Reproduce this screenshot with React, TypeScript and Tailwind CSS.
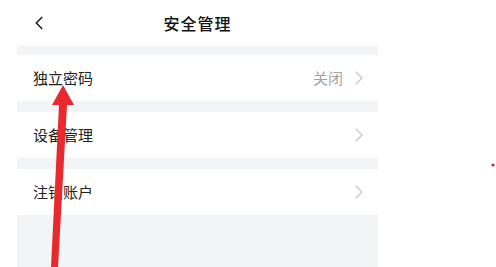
import { ChevronLeft, ChevronRight } from "lucide-react";

const rows = [
  { label: "独立密码", value: "关闭" },
  { label: "设备管理" },
  { label: "注销账户" },
];

function Row({ label, value }: { label: string; value?: string }) {
  return (
    <div className="h-[46px] bg-white flex items-center pl-4 pr-[7px]">
      <span className="text-[15px] text-[#222]">{label}</span>
      <div className="ml-auto flex items-center gap-[4px]">
        {value && <span className="text-[15px] text-[#a3a3a3]">{value}</span>}
        <ChevronRight className="size-[24px] text-[#c4c4c4]" strokeWidth={1.1} />
      </div>
    </div>
  );
}

export default function App() {
  return (
    <div
      className="relative w-[496px] h-[267px] bg-white overflow-hidden"
      style={{ fontFamily: '"Noto Sans CJK SC", "Noto Sans", sans-serif' }}
    >
      <div className="ml-[17px] w-[361px] h-full flex flex-col bg-[#f3f4f6]">
        {/* Header */}
        <div className="h-[46px] bg-white flex items-center relative shrink-0">
          <ChevronLeft className="absolute left-[11px] size-[22px] text-[#222]" strokeWidth={1.8} />
          <span className="mx-auto text-[16px] font-medium text-[#111] tracking-[1px]">安全管理</span>
        </div>
        <div className="h-[9px] shrink-0" />
        {rows.map((r, i) => (
          <div key={r.label}>
            {i > 0 && <div className="h-[11px]" />}
            <Row label={r.label} value={r.value} />
          </div>
        ))}
      </div>

      {/* Red arrow annotation */}
      <svg className="absolute left-0 top-0" width="496" height="267" viewBox="0 0 496 267">
        <polygon points="63,85 74,105 67,105 58,267 51,267 59,105 52,105" fill="#e8292e" />
        <circle cx="493" cy="165" r="1.6" fill="#c0263a" />
      </svg>
    </div>
  );
}
